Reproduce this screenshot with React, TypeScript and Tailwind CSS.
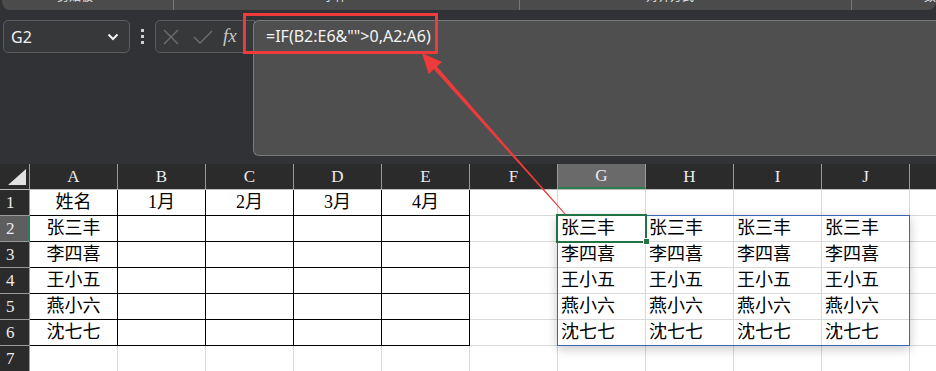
import React from "react";

const cols = ["A", "B", "C", "D", "E", "F", "G", "H", "I", "J", ""];
const names = ["张三丰", "李四喜", "王小五", "燕小六", "沈七七"];

const cellText = (r: number, c: number) => {
  if (r === 1) return ["姓名", "1月", "2月", "3月", "4月"][c] ?? "";
  if (r >= 2 && r <= 6) {
    if (c === 0) return names[r - 2];
    if (c >= 6 && c <= 9) return names[r - 2];
  }
  return "";
};

const serif = { fontFamily: '"Liberation Serif", "Noto Sans CJK SC", serif' };
const ui = { fontFamily: '"Noto Sans", "Open Sans", sans-serif' };

function Ribbon() {
  return (
    <div className="ml-[2px] h-[10px] rounded-b-[8px] bg-[#4b4b4b] overflow-hidden text-[12px] leading-[16px] text-[#e6e6e6]" style={{ fontFamily: '"Noto Sans CJK SC", sans-serif' }}>
      <div className="flex items-start -mt-[12px] h-[24px] whitespace-nowrap">
        <span className="shrink-0 ml-[55px] w-[104px]">剪贴板</span>
        <span className="shrink-0 w-[12px] text-[9px]">◲</span>
        <span className="shrink-0 w-px h-[24px] bg-[#777]" />
        <span className="shrink-0 ml-[149px] w-[184px]">字体</span>
        <span className="shrink-0 w-[12px] text-[9px]">◲</span>
        <span className="shrink-0 w-px h-[24px] bg-[#777]" />
        <span className="shrink-0 ml-[126px] w-[195px]">对齐方式</span>
        <span className="shrink-0 w-[10px] text-[9px]">◲</span>
        <span className="shrink-0 w-px h-[24px] bg-[#777]" />
        <span className="shrink-0 ml-[72px]">数字</span>
      </div>
    </div>
  );
}

function FormulaRow() {
  return (
    <div className="flex mt-[10px] items-start">
      <div className="shrink-0 ml-[3px] w-[127px] h-[33px] rounded-[5px] border border-[#5c5c5c] bg-[#37383a] flex items-center pl-[7px] pr-[10px] text-[#f2f2f2] text-[16px]" style={ui}>
        <span className="flex-1">G2</span>
        <svg width="12" height="8" viewBox="0 0 12 8">
          <path d="M1.5 1.5 L6 6 L10.5 1.5" stroke="#f2f2f2" strokeWidth="2" fill="none" />
        </svg>
      </div>
      <div className="shrink-0 w-[25px] h-[33px] flex flex-col items-center justify-center gap-[3px]">
        <span className="w-[3px] h-[3px] bg-[#cfcfcf]" />
        <span className="w-[3px] h-[3px] bg-[#cfcfcf]" />
        <span className="w-[3px] h-[3px] bg-[#cfcfcf]" />
      </div>
      <div className="shrink-0 w-[100px] h-[33px] rounded-l-[5px] border border-[#5c5c5c] bg-[#37383a] flex items-center pl-[7px] gap-[14px]">
        <svg width="16" height="16" viewBox="0 0 16 16">
          <path d="M1 1 L15 15 M15 1 L1 15" stroke="#6e6e6e" strokeWidth="1.4" />
        </svg>
        <svg width="20" height="16" viewBox="0 0 20 16">
          <path d="M1 8 L7 14 L19 2" stroke="#6e6e6e" strokeWidth="1.4" fill="none" />
        </svg>
        <span className="text-[#c8c8c8] text-[19px] italic -ml-[4px]" style={{ fontFamily: '"Liberation Serif", serif' }}>fx</span>
      </div>
      <div className="-ml-[2px] flex-1 h-[136px] rounded-l-[6px] border-l border-t border-b border-[#7a7a7a] bg-[#4f4f4f] pl-[12px] pt-[3px] text-[16px] text-[#f4f4f4]" style={ui}>
        =IF(B2:E6&amp;""&gt;0,A2:A6)
      </div>
    </div>
  );
}

function Grid() {
  return (
    <div className="mt-[8px]">
      <div className="flex h-[26px] bg-[#2b2b2b] border-b border-[#bdbdbd]">
        <div className="w-[30px] border-r border-[#9a9a9a] relative">
          <svg className="absolute left-0 top-0" width="30" height="25" viewBox="0 0 30 25">
            <polygon points="8,21 26,21 26,5" fill="#e2e2e2" />
          </svg>
        </div>
        {cols.map((c, i) => (
          <div
            key={i}
            className={
              (i === 10 ? "flex-1" : "w-[88px] border-r border-[#9a9a9a]") +
              " flex items-center justify-center text-[17px] text-[#ececec] " +
              (i === 6 ? "bg-[#6a6a6a] border-b-2 border-b-[#2e7d4f]" : "")
            }
            style={serif}
          >
            {c}
          </div>
        ))}
      </div>
      {[1, 2, 3, 4, 5, 6, 7].map((r) => (
        <div key={r} className="flex h-[26px]">
          <div
            className={
              "w-[30px] border-b border-[#9a9a9a] pl-[6px] flex items-center text-[17px] text-[#ececec] " +
              (r === 2 ? "bg-[#5e5e5e] border-r-2 border-r-[#2e7d4f]" : "bg-[#2b2b2b] border-r border-r-[#9a9a9a]")
            }
            style={serif}
          >
            {r}
          </div>
          {cols.map((_, c) => {
            const table = r <= 6 && c <= 4;
            const left = c >= 6 && c <= 9;
            return (
              <div
                key={c}
                className={
                  (c === 10 ? "flex-1 " : "w-[88px] border-r ") +
                  "bg-white border-b flex items-center text-[18px] text-black " +
                  (table ? "border-black justify-center " : "border-[#d9d9d9] ") +
                  (left ? "pl-[3px]" : "justify-center")
                }
                style={serif}
              >
                {cellText(r, c)}
              </div>
            );
          })}
        </div>
      ))}
    </div>
  );
}

export default function App() {
  return (
    <div className="w-[936px] h-[371px] overflow-hidden bg-[#303235] relative">
      <Ribbon />
      <FormulaRow />
      <Grid />

      {/* spill range outline */}
      <div className="absolute left-[557px] top-[215px] w-[353px] h-[131px] border border-[#3a66b5] shadow-[0_3px_10px_rgba(0,0,0,0.22)] pointer-events-none" />
      {/* active cell */}
      <div className="absolute left-[556px] top-[214px] w-[91px] h-[29px] border-2 border-[#217346] pointer-events-none" />
      <div className="absolute left-[643px] top-[238px] w-[7px] h-[7px] bg-[#217346] border border-white" />

      {/* callout */}
      <div className="absolute left-[243px] top-[13px] w-[195px] h-[41px] border-[3px] border-[#ee3b3b]" />
      <svg className="absolute left-0 top-0 pointer-events-none" width="936" height="371" viewBox="0 0 936 371">
        <polygon
          points="422,53 442,61.9 436.8,66.6 566.4,214.7 565.6,215.3 433.8,69.2 428.6,73.9"
          fill="#ee3a3a"
        />
      </svg>
    </div>
  );
}
